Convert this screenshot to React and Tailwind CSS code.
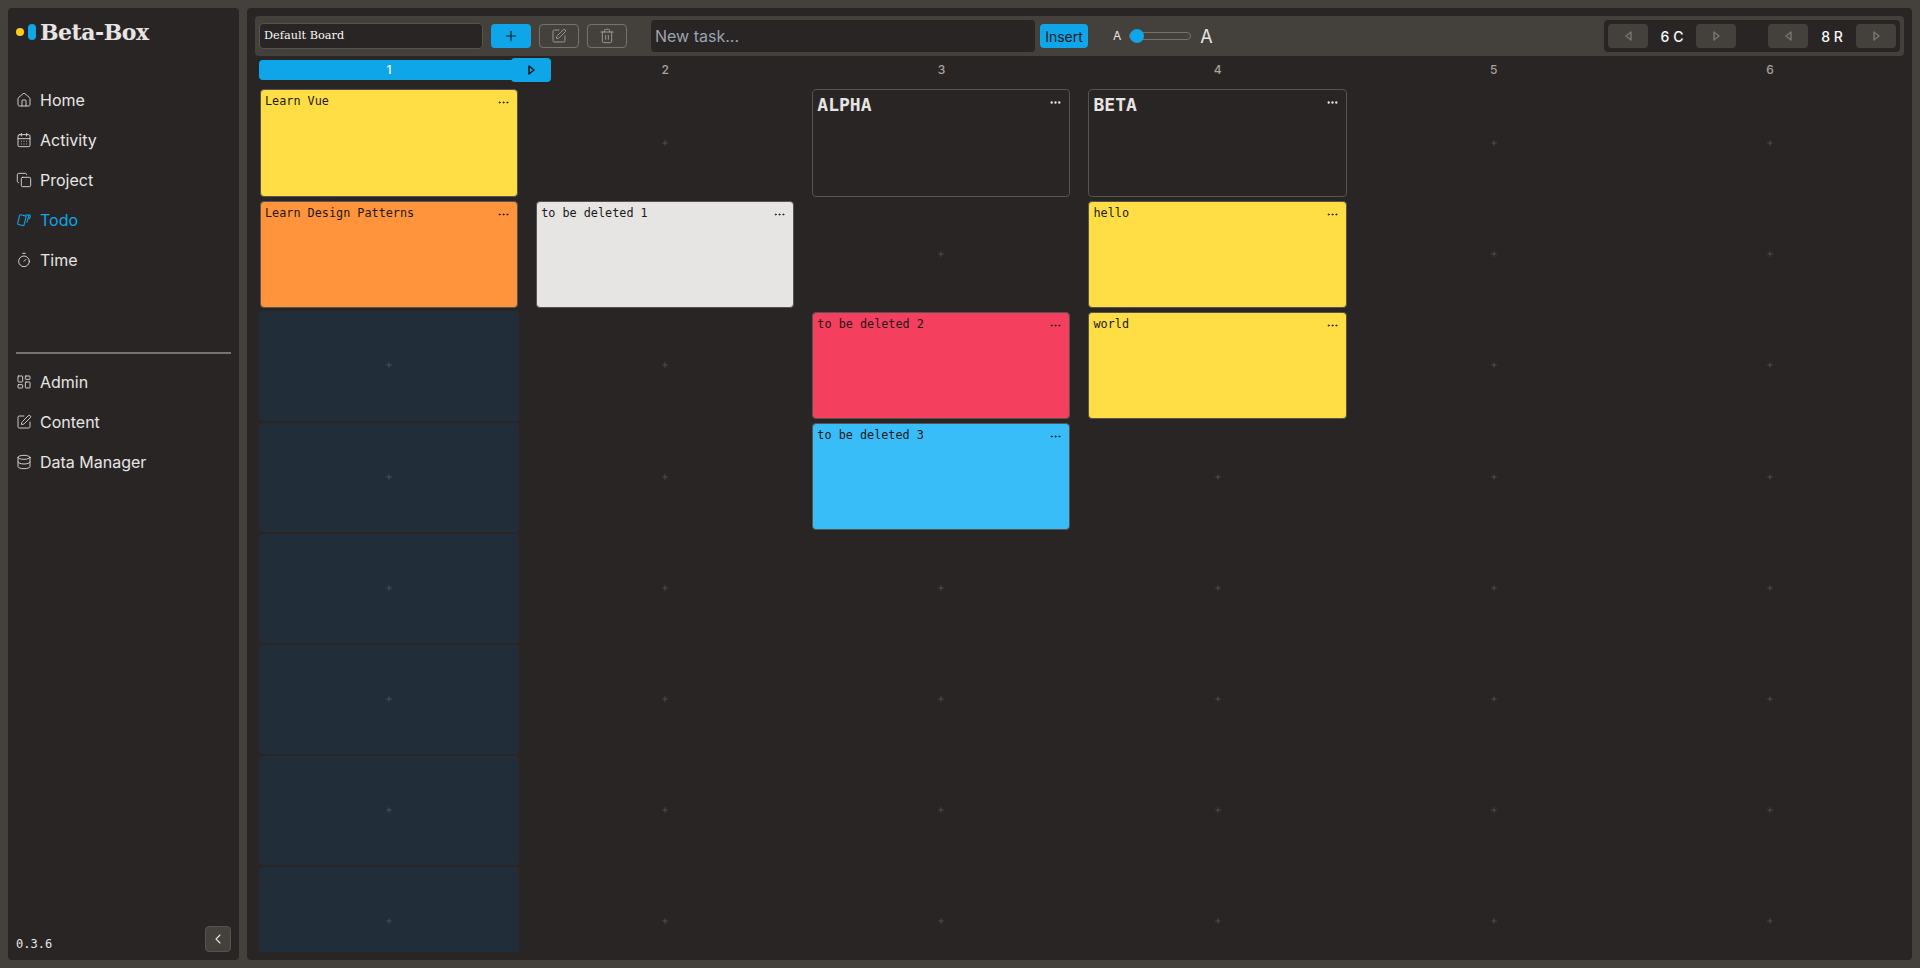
import React from "react";
import { Plus, Home, CalendarDays, Copy, Timer, LayoutDashboard, SquarePen, Database, ChevronLeft, Trash2, Ellipsis } from "lucide-react";

const sans = "font-['Inter','Liberation_Sans',sans-serif]";
const mono = "font-['DejaVu_Sans_Mono','Liberation_Mono',monospace]";

function Cards({ className }) {
  return (
    <svg viewBox="0 0 16 16" className={className} fill="none" stroke="currentColor" strokeWidth="1.1">
      <rect x="2.6" y="3.2" width="6.6" height="10" rx="1" transform="rotate(14 6 8)" />
      <path d="M9.6 2.6 12 3.4c.6.2.8.7.6 1.2l-1.8 6" />
      <path d="M12.4 2.6l1.6.7c.4.2.5.6.4 1l-1.2 3" />
    </svg>
  );
}

function Tri({ dir, className }) {
  return (
    <svg viewBox="0 0 7 10" className={className} fill="none" stroke="currentColor" strokeWidth="1.5" strokeLinejoin="round">
      {dir === "left" ? <path d="M6 1 1 5l5 4z" /> : <path d="M1 1l5 4-5 4z" />}
    </svg>
  );
}

const nav = [
  ["Home", Home],
  ["Activity", CalendarDays],
  ["Project", Copy],
  ["Todo", Cards, true],
  ["Time", Timer],
];
const nav2 = [
  ["Admin", LayoutDashboard],
  ["Content", SquarePen],
  ["Data Manager", Database],
];

function NavItem({ label, icon: Icon, active }) {
  return (
    <div className={`flex items-center h-[40px] gap-[8px] text-[16px] ${active ? "text-[#0ea5e9]" : "text-[#e7e5e4]"}`}>
      <Icon className="w-[16px] h-[16px]" strokeWidth={1.3} />
      <span>{label}</span>
    </div>
  );
}

function Note({ title, color }) {
  return (
    <div className={`h-[107.4px] mt-[0.4px] mx-[1px] rounded-[4px] border border-[#57534e] ${color} text-[#1c1917] flex justify-between pl-[4px] pr-[7px] pt-[1px] ${mono}`}>
      <span className="text-[11.8px] leading-[20px]">{title}</span>
      <Ellipsis className="w-[13px] h-[13px] mt-[5px]" strokeWidth={1.7} />
    </div>
  );
}

function Group({ title }) {
  return (
    <div className={`h-[107.4px] mt-[0.4px] mx-[1px] rounded-[4px] border border-[#57534e] text-[#e7e5e4] flex justify-between pl-[4px] pr-[7px] pt-[1px] ${mono}`}>
      <span className="text-[18px] leading-[28px] font-bold">{title}</span>
      <Ellipsis className="w-[13px] h-[13px] mt-[5px]" strokeWidth={2.4} />
    </div>
  );
}

function Slot({ blue }) {
  return (
    <div className={`h-[109.2px] rounded-[4px] flex items-center justify-center ${blue ? "bg-[#212e39]" : ""}`}>
      <Plus className="w-[8px] h-[8px] text-[#57534e] -mt-[1px]" strokeWidth={2.5} />
    </div>
  );
}

const Cell = ({ c }) => {
  if (!c) return <Slot />;
  if (c === "blue") return <Slot blue />;
  return <div className="h-[109.2px]">{c}</div>;
};

const Y = "bg-[#ffde45]";
const columns = [
  [<Note title="Learn Vue" color={Y} />, <Note title="Learn Design Patterns" color="bg-[#ff943d]" />, "blue", "blue", "blue", "blue", "blue", "blue"],
  [null, <Note title="to be deleted 1" color="bg-[#e7e5e4]" />, null, null, null, null, null, null],
  [<Group title="ALPHA" />, null, <Note title="to be deleted 2" color="bg-[#f43f5e]" />, <Note title="to be deleted 3" color="bg-[#38bdf8]" />, null, null, null, null],
  [<Group title="BETA" />, <Note title="hello" color={Y} />, <Note title="world" color={Y} />, null, null, null, null, null],
  Array(8).fill(null),
  Array(8).fill(null),
];

function Stepper({ label }) {
  const btn = "w-[40px] h-[24px] rounded-[4px] bg-[#44403c] flex items-center justify-center text-[#78716c]";
  return (
    <div className="flex items-center">
      <div className={btn}><Tri dir="left" className="w-[7px] h-[10px]" /></div>
      <span className="w-[48px] text-center text-[14px] text-[#fafaf9] font-medium">{label}</span>
      <div className={btn}><Tri dir="right" className="w-[7px] h-[10px]" /></div>
    </div>
  );
}

export default function App() {
  return (
    <div className={`h-[968px] w-[1920px] bg-[#44403c] p-[8px] flex gap-[8px] overflow-hidden ${sans}`}>
      <aside className="w-[231px] shrink-0 bg-[#292524] rounded-[4px] flex flex-col px-[8px]">
        <div className="flex items-center h-[48px] gap-[3px]">
          <span className="w-[8px] h-[8px] rounded-full bg-[#facc15]" />
          <span className="w-[8px] h-[16px] rounded-full bg-[#0ea5e9] ml-[1px]" />
          <span className="text-[22px] font-bold text-[#e7e5e4] font-['DejaVu_Serif',serif] tracking-[-0.5px] leading-none ml-[1px]">Beta-Box</span>
        </div>
        <nav className="mt-[24px] flex flex-col">
          {nav.map(([l, I, a]) => <NavItem key={l} label={l} icon={I} active={a} />)}
        </nav>
        <div className="mt-[72px] h-[2px] bg-[#78716c]" />
        <nav className="mt-[8px] flex flex-col">
          {nav2.map(([l, I]) => <NavItem key={l} label={l} icon={I} />)}
        </nav>
        <div className="mt-auto flex items-end justify-between pb-[8px]">
          <span className={`text-[12px] leading-[16px] text-[#e7e5e4] ${mono}`}>0.3.6</span>
          <div className="w-[26px] h-[26px] rounded-[4px] bg-[#44403c] border border-[#57534e] flex items-center justify-center text-[#e7e5e4]">
            <ChevronLeft className="w-[16px] h-[16px]" strokeWidth={1.6} />
          </div>
        </div>
      </aside>

      <main className="flex-1 min-w-0 bg-[#292524] rounded-[4px] p-[8px] flex flex-col overflow-hidden">
        <div className="h-[40px] shrink-0 bg-[#44403c] rounded-[4px] flex items-center px-[4px]">
          <div className="w-[224px] h-[26px] rounded-[4px] bg-[#292524] border border-[#57534e] flex items-center pl-[4px] text-[11.3px] text-[#fafaf9] font-['DejaVu_Serif',serif]">Default Board</div>
          <div className="ml-[8px] w-[40px] h-[24px] rounded-[4px] bg-[#0ea5e9] flex items-center justify-center text-[#1c1917]"><Plus className="w-[16px] h-[16px]" strokeWidth={1.6} /></div>
          <div className="ml-[8px] w-[40px] h-[24px] rounded-[4px] border border-[#78716c] flex items-center justify-center text-[#a8a29e]"><SquarePen className="w-[16px] h-[16px]" strokeWidth={1.3} /></div>
          <div className="ml-[8px] w-[40px] h-[24px] rounded-[4px] border border-[#78716c] flex items-center justify-center text-[#a8a29e]"><Trash2 className="w-[16px] h-[16px]" strokeWidth={1.3} /></div>
          <div className="ml-[24px] w-[384px] h-[32px] rounded-[4px] bg-[#292524] flex items-center pl-[4px] text-[16px] text-[#9ca3af]">New task...</div>
          <div className="ml-[5px] w-[48px] h-[24px] rounded-[4px] bg-[#0ea5e9] flex items-center justify-center text-[14px] text-[#1c1917]">Insert</div>
          <span className="ml-[25px] text-[12px] text-[#e7e5e4]">A</span>
          <div className="ml-[8px] relative w-[62px] h-[8px] rounded-full border border-[#78716c]">
            <span className="absolute left-0 top-[-4px] w-[14px] h-[14px] rounded-full bg-[#0ea5e9]" />
          </div>
          <span className="ml-[9px] text-[18px] text-[#e7e5e4]">A</span>
          <div className="ml-auto h-[32px] rounded-[4px] bg-[#292524] flex items-center px-[4px] gap-[32px]">
            <Stepper label="6 C" />
            <Stepper label="8 R" />
          </div>
        </div>

        <div className="flex-1 min-h-0 overflow-hidden grid grid-cols-6 gap-[16px] mt-[2px] pt-[2px] px-[4px] items-start">
          {columns.map((col, i) => (
            <div key={i} className="min-w-0 flex flex-col">
              <div className={`relative h-[20px] mb-[9px] rounded-[4px] flex items-center justify-center text-[12px] font-medium ${i === 0 ? "bg-[#0ea5e9] text-[#fafaf9]" : "text-[#a8a29e]"}`}>
                {i + 1}
                {i === 0 && (
                  <div className="absolute left-[252px] top-[-2px] w-[40px] h-[24px] rounded-[4px] bg-[#0ea5e9] flex items-center justify-center text-[#1c1917]"><Tri dir="right" className="w-[7px] h-[10px]" /></div>
                )}
              </div>
              <div className="flex flex-col gap-[2px]">
                {col.map((c, j) => <Cell key={j} c={c} />)}
              </div>
            </div>
          ))}
        </div>
      </main>
    </div>
  );
}
